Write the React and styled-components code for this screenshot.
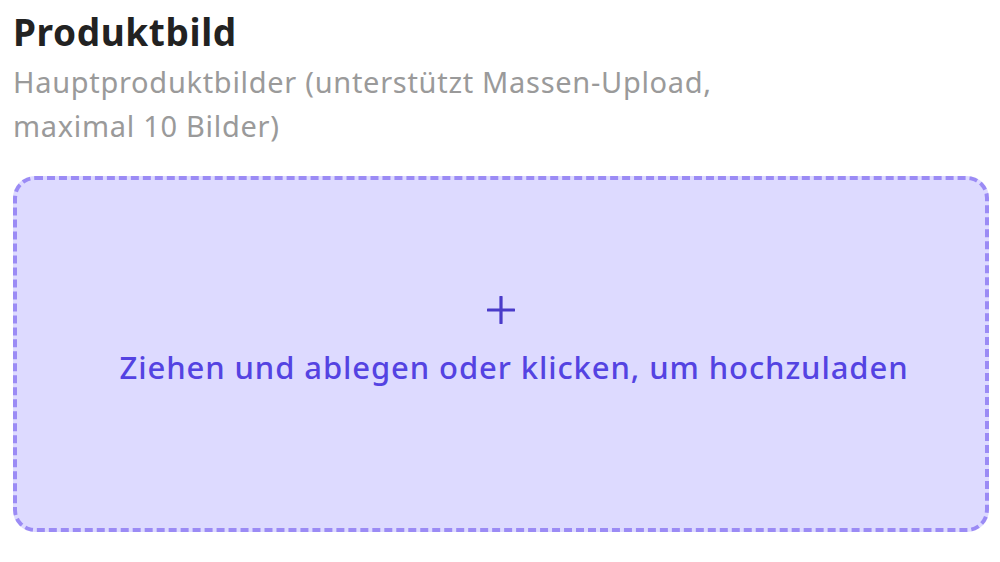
import React from 'react';
import styled, { createGlobalStyle } from 'styled-components';

const GlobalStyle = createGlobalStyle`
  html, body {
    margin: 0;
    padding: 0;
    background: #ffffff;
    font-family: "Noto Sans", "Open Sans", sans-serif;
  }
`;

const Wrapper = styled.div`
  padding: 6px 11px 0 13px;
  display: flex;
  flex-direction: column;
`;

const Title = styled.h2`
  margin: 0;
  font-size: 37px;
  font-weight: 700;
  color: #222222;
  line-height: 52px;
  letter-spacing: 0.6px;
`;

const Hint = styled.p`
  margin: 2px 0 0;
  font-size: 29px;
  line-height: 44px;
  color: #9a9a9a;
  letter-spacing: 0.7px;
  max-width: 750px;
`;

const DropZone = styled.div`
  margin-top: 28px;
  height: 356px;
  border: 4px dashed #9b8bf5;
  border-radius: 22px;
  background: #dddaff;
  display: flex;
  flex-direction: column;
  align-items: center;
  justify-content: center;
  gap: 23px;
  padding-bottom: 25px;
  box-sizing: border-box;
  cursor: pointer;
`;

const PlusIcon = styled.svg`
  width: 28px;
  height: 28px;
  display: block;
`;

const DropText = styled.div`
  font-size: 31px;
  font-weight: 500;
  color: #5443e2;
  line-height: 40px;
  letter-spacing: 0.9px;
  padding-left: 26px;
`;

const App = () => {
  return (
    <>
      <GlobalStyle />
      <Wrapper>
        <Title>Produktbild</Title>
        <Hint>Hauptproduktbilder (unterstützt Massen-Upload, maximal 10 Bilder)</Hint>
        <DropZone>
          <PlusIcon viewBox="0 0 28 28">
            <path d="M14 1 V27 M1 14 H27" stroke="#4a3bc9" strokeWidth="3.2" strokeLinecap="round" fill="none" />
          </PlusIcon>
          <DropText>Ziehen und ablegen oder klicken, um hochzuladen</DropText>
        </DropZone>
      </Wrapper>
    </>
  );
};

export default App;
